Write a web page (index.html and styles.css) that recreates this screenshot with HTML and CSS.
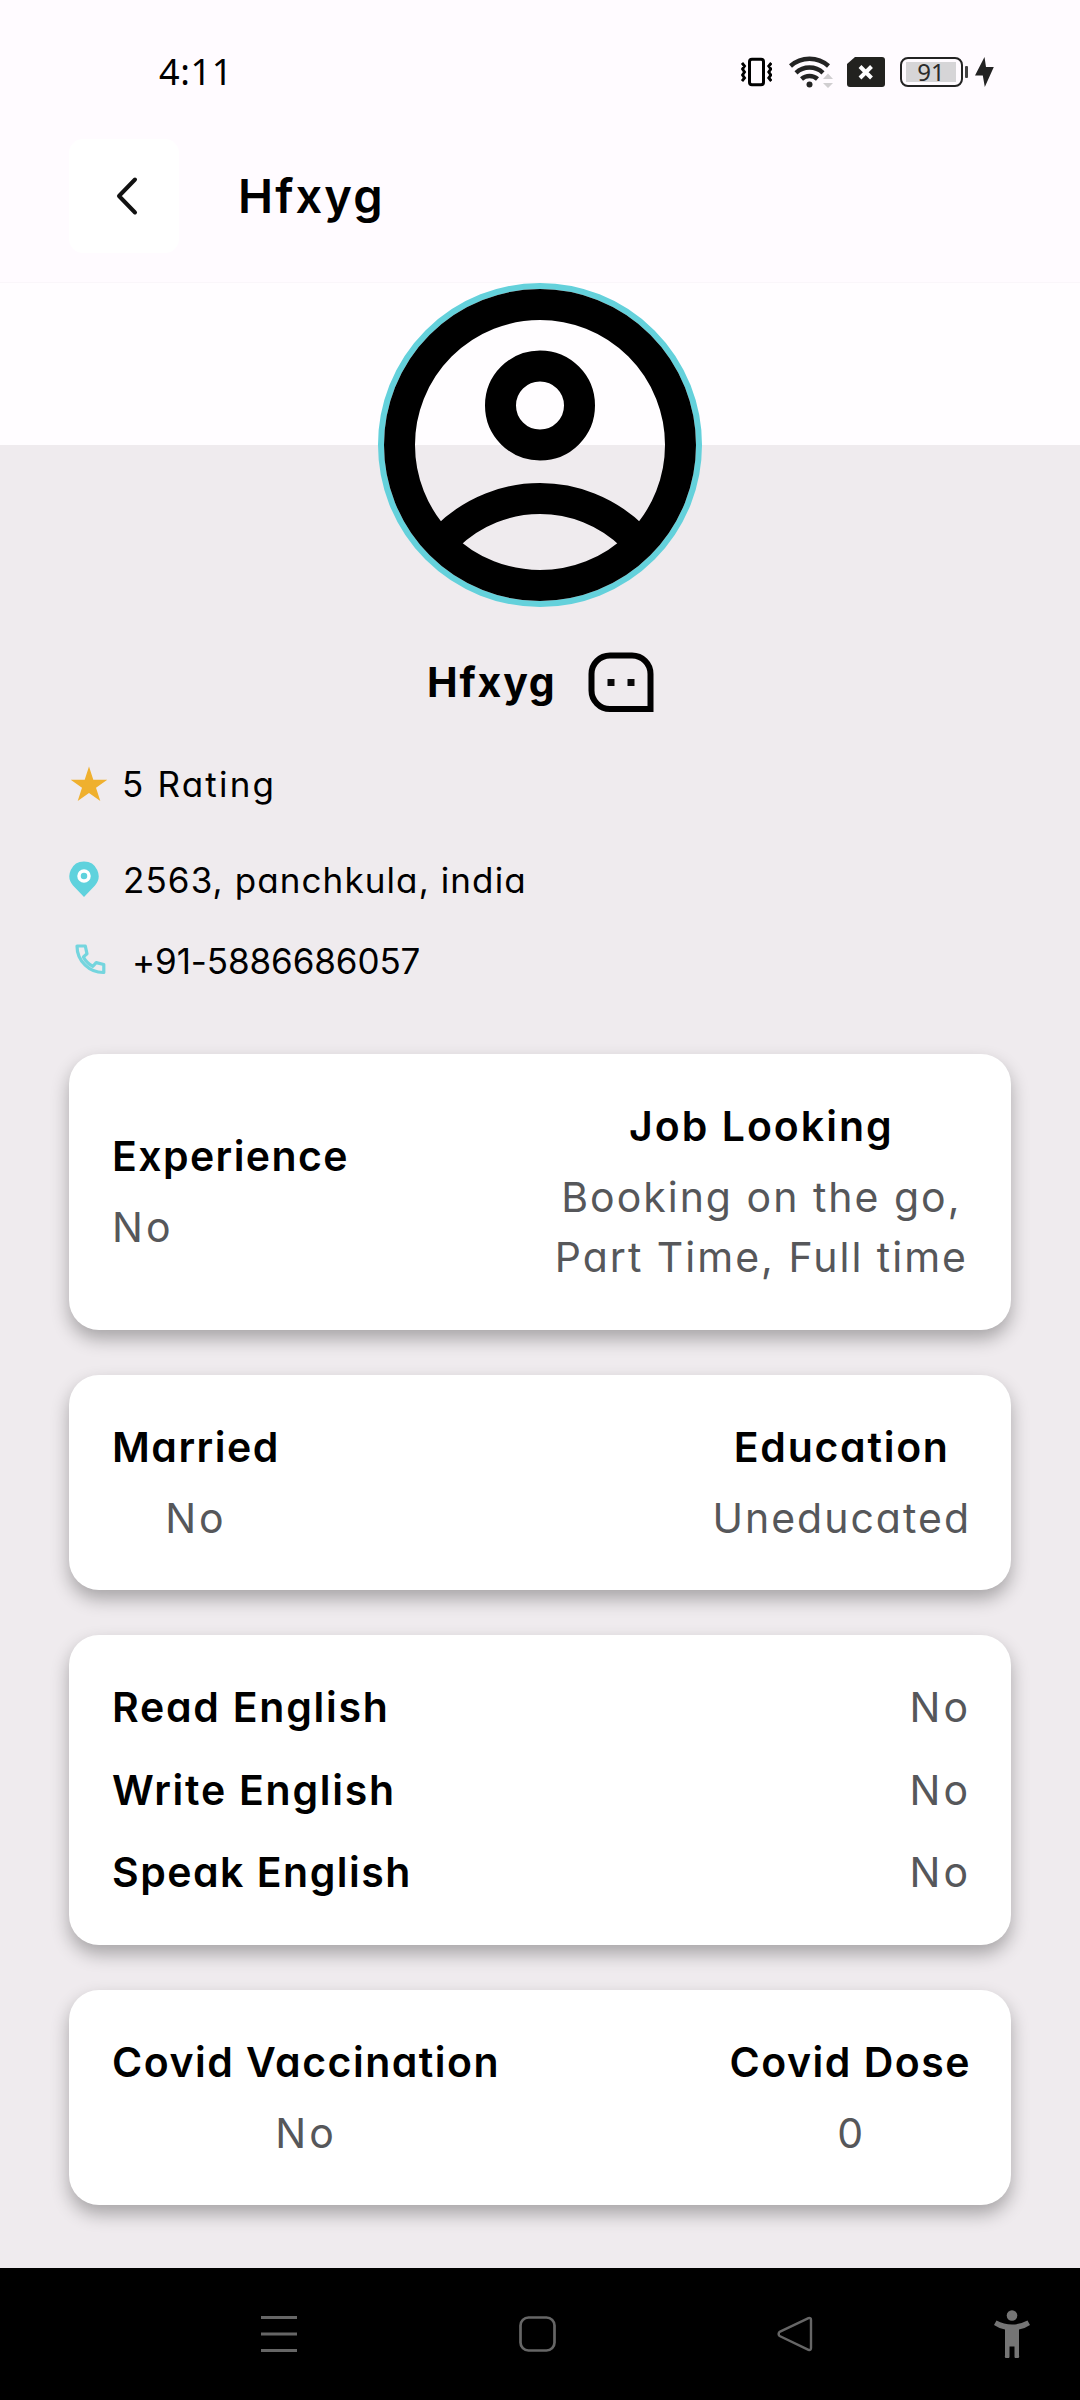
FILE: index.html
```
<!DOCTYPE html>
<html lang="en">
<head>
<meta charset="utf-8">
<title>Hfxyg</title>
<link rel="stylesheet" href="styles.css">
</head>
<body>
<div class="screen">
  <div class="status">
    <span class="time">4:11</span>
    <div class="status-icons">
      <svg width="31" height="36" viewBox="741 54 31 36" fill="none" stroke="#000">
        <rect x="749.500" y="59.300" width="14" height="25.400" rx="2.500" stroke-width="3"/>
        <path d="M742 63l2.500 3-2 3 2 3-2 3 2 3-2.500 3M771.300 63l-2.500 3 2 3-2 3 2 3-2 3 2.500 3" stroke-width="2.900"/>
      </svg>
      <svg class="i-wifi" width="45" height="36" viewBox="789 54 45 36" fill="none" stroke="#232323" stroke-width="4.500">
        <path d="M790.500 66a28.500 28.500 0 0 1 38 0M796 72.800a20 20 0 0 1 27 0M801.500 79a12 12 0 0 1 16 0"/>
        <circle cx="809.500" cy="84.500" r="3" fill="#232323" stroke="none"/>
        <path d="M823 79l5-5.500 5 5.500zM823 83l5 5 5-5z" fill="#d0ced0" stroke="none"/>
      </svg>
      <svg class="i-sim" width="38" height="36" viewBox="847 54 38 36">
        <path d="M855 57h27a3 3 0 0 1 3 3v24a3 3 0 0 1-3 3h-32a3 3 0 0 1-3-3V64z" fill="#22221f"/>
        <path d="M860 66.500l11.500 11.500M871.500 66.500l-11.500 11.500" stroke="#fff" stroke-width="4"/>
      </svg>
      <div class="battery"><span class="level">91</span></div>
      <svg width="24" height="36" viewBox="971 54 24 36">
        <path d="M984.500 57L975 75.500h7.800l2 11.500 9-20h-7.800z" fill="#232323"/>
      </svg>
    </div>
  </div>

  <header class="appbar">
    <div class="back">
      <svg width="24" height="40" viewBox="0 0 24 40" fill="none" stroke="#111" stroke-width="4" stroke-linecap="round" stroke-linejoin="round"><path d="M20 3.500L4 20l16 16.500"/></svg>
    </div>
    <h1 class="title">Hfxyg</h1>
  </header>

  <main class="profile">
    <svg class="avatar" width="324" height="324" viewBox="0 0 324 324" fill="none">
      <clipPath id="face"><circle cx="162" cy="162" r="150"/></clipPath>
      <circle cx="162" cy="162" r="159" stroke="#64d1db" stroke-width="6"/>
      <g stroke="#000" stroke-width="31">
        <circle cx="162" cy="162" r="140.500"/>
        <circle cx="162" cy="122.500" r="39.500"/>
        <circle cx="162" cy="348" r="132.500" clip-path="url(#face)"/>
      </g>
    </svg>

    <div class="name-row">
      <span class="name">Hfxyg</span>
      <svg width="66" height="60" viewBox="0 0 66 60" fill="none">
        <path d="M62.500 57H22A18.500 18.500 0 0 1 3.500 38.500V22A18.500 18.500 0 0 1 22 3.500h22A18.500 18.500 0 0 1 62.500 22z" stroke="#000" stroke-width="6"/>
        <path d="M19.500 27h7v7h-7zM39.500 27h7v7h-7z" fill="#0a0a0a"/>
      </svg>
    </div>

    <div class="info rate">
      <svg width="38" height="36" viewBox="0 0 38 36"><path d="M19 .500l4.300 13.200h14L26 21.800l4.300 13.200L19 26.900 7.700 35 12 21.800.700 13.700h14z" fill="#efb02e"/></svg>
      <span class="rating">5 Rating</span>
    </div>
    <div class="info address">
      <svg width="30" height="36" viewBox="0 0 30 36"><path d="M15 36L4 24.500A14.500 14.500 0 0 1 15 .500 14.500 14.500 0 0 1 26 24.500z" fill="#5fd2dd"/><circle cx="15" cy="15" r="5" fill="none" stroke="#fff" stroke-width="3.500"/></svg>
      <span class="street">2563, panchkula, india</span>
    </div>
    <div class="info phone">
      <svg width="31" height="31" viewBox="0 0 31 31" fill="none" stroke="#74d5de" stroke-width="3.200" stroke-linejoin="round"><path d="M2 2h8.300l1.700 7.800-3.600 3.100c2.300 4.300 5.200 7.200 9.500 9.400l3.300-3.700 7.600 1.900v8C14.800 28.800 2 17.500 2 2z"/></svg>
      <span class="number">+91-5886686057</span>
    </div>

    <section class="cards">
      <div class="card">
        <div class="field start"><b class="s14">Experience</b><span class="val s30">No</span></div>
        <div class="field jobs"><b class="s20">Job Looking</b><span class="val s20">Booking on the go,<br>Part Time, Full time</span></div>
      </div>
      <div class="card">
        <div class="field"><b class="s15">Married</b><span class="val s30">No</span></div>
        <div class="field"><b class="s17">Education</b><span class="val s20">Uneducated</span></div>
      </div>
      <div class="card list">
        <div class="row"><b class="s17">Read English</b><span class="val s30">No</span></div>
        <div class="row"><b class="s17">Write English</b><span class="val s30">No</span></div>
        <div class="row"><b class="s15">Speak English</b><span class="val s30">No</span></div>
      </div>
      <div class="card">
        <div class="field"><b class="s15">Covid Vaccination</b><span class="val s30">No</span></div>
        <div class="field"><b class="s15">Covid Dose</b><span class="val">0</span></div>
      </div>
    </section>
  </main>

  <nav class="navbar">
    <svg width="36" height="36" viewBox="0 0 36 36" stroke="#666" stroke-width="3"><path d="M0 1.500h36M0 18h36M0 34.500h36"/></svg>
    <svg class="n-home" width="37" height="36" viewBox="0 0 37 36" fill="none" stroke="#666" stroke-width="2.700"><rect x="1.500" y="1.500" width="34" height="33" rx="8"/></svg>
    <svg class="n-back" width="36" height="36" viewBox="0 0 36 36" fill="none" stroke="#666" stroke-width="2.400" stroke-linejoin="round"><path d="M31.500 2.200L2.600 15.800Q.700 18 2.600 20L31.500 33.800Q34 34.500 34 32V4Q34 1.500 31.500 2.200z"/></svg>
    <svg class="n-access" width="36" height="48" viewBox="0 0 36 48" fill="#757575"><circle cx="18" cy="5.500" r="5.300"/><path d="M2.500 10.500Q10 14.500 18 14.500T33.500 10.500L36 15Q31 18.500 25 19.500V45.500a2 2 0 0 1-4.500 1.500V36.500h-5V47a2 2 0 0 1-4.500-1.500v-26Q5 18.500 0 15z"/></svg>
  </nav>
</div>
</body>
</html>
```
FILE: styles.css
```
* { box-sizing: border-box; }
body { margin: 0; }
svg { display: block; flex: none; }

.screen {
  width: 1080px;
  height: 2400px;
  display: flex;
  flex-direction: column;
  background: #fffbff;
  color: #000;
  font-family: Inter, "Liberation Sans", sans-serif;
  font-feature-settings: "cv11";
  overflow: hidden;
}

/* Status bar */
.status {
  height: 139px;
  padding: 47px 85px 0 159px;
  display: flex;
  justify-content: space-between;
  align-items: flex-start;
}
.time { font: 36px/49px "Noto Sans", sans-serif; letter-spacing: .6px; }
.status-icons { display: flex; padding-top: 7px; }
.i-wifi { margin-left: 17px; }
.i-sim { margin-left: 13px; }
.battery {
  width: 63px;
  height: 30px;
  margin: 3px 8px 0 15px;
  padding: 3px;
  border: 2px solid #232323;
  border-radius: 8px;
  position: relative;
}
.battery::after {
  content: "";
  position: absolute;
  left: 63px;
  top: 7px;
  width: 3px;
  height: 12px;
  border-radius: 1px;
  background: #444;
}
.level {
  display: block;
  width: 50px;
  height: 20px;
  margin-left: 1px;
  background: #d6d5d7;
  color: #2a2a2a;
  font: 24px/20px "Noto Sans", sans-serif;
  text-align: center;
}

/* App bar */
.appbar {
  height: 144px;
  padding-left: 69px;
  display: flex;
  align-items: flex-start;
  gap: 59px;
  border-bottom: 1px solid #faf6fa;
}
.back {
  width: 110px;
  height: 114px;
  padding-left: 6px;
  border-radius: 14px;
  background: #fff;
  display: flex;
  align-items: center;
  justify-content: center;
}
.title { margin: 27px 0 0; font-size: 47px; line-height: 60px; font-weight: 600; letter-spacing: 2.1px; }

/* Profile */
.profile {
  height: 1985px;
  padding: 0 69px;
  background: linear-gradient(#fffdff 162px, #efebee 162px);
}
.avatar { margin: 0 auto; }
.name-row { margin-top: 45px; padding-left: 358px; display: flex; gap: 31px; }
.name { width: 130px; font-size: 41px; line-height: 60px; font-weight: 700; letter-spacing: 1.8px; }

.info { height: 44px; display: flex; align-items: center; font-size: 35px; line-height: 44px; }
.info.rate { margin-top: 50px; padding-left: 1px; gap: 14px; }
.info.address { margin-top: 52px; gap: 24px; }
.address svg { margin-top: -3px; }
.info.phone { margin-top: 37px; padding-left: 6px; gap: 26px; }
.phone svg { margin-top: -4px; }
.rating { letter-spacing: 2.2px; }
.street { letter-spacing: 1.1px; }
.number { letter-spacing: -.1px; }

/* Detail cards */
.cards { margin-top: 71px; display: flex; flex-direction: column; gap: 45px; }
.card {
  padding: 42px 40px 42.500px 43px;
  display: flex;
  justify-content: space-between;
  align-items: center;
  background: #fff;
  border-radius: 30px;
  box-shadow: 0 9px 18px rgba(0, 0, 0, .3);
  font-size: 41px;
  line-height: 60px;
}
.card b { font-weight: 600; }
.field { display: flex; flex-direction: column; align-items: center; gap: 11px; text-align: center; }
.field.start { align-items: flex-start; }
.field.jobs { margin-right: 3px; }
.val { color: #56575a; }
.list { flex-direction: column; align-items: stretch; gap: 22.500px; }
.row { display: flex; justify-content: space-between; }

/* Letter spacing steps */
.s14 { letter-spacing: 1.4px; }
.s15 { letter-spacing: 1.5px; }
.s17 { letter-spacing: 1.75px; }
.s20 { letter-spacing: 2px; }
.s30 { letter-spacing: 3px; }

/* System navigation */
.navbar {
  height: 132px;
  padding: 0 50px 0 261px;
  display: flex;
  align-items: center;
  background: #000;
}
.n-home { margin-left: 222px; }
.n-back { margin-left: 221px; }
.n-access { margin-left: auto; }
```
